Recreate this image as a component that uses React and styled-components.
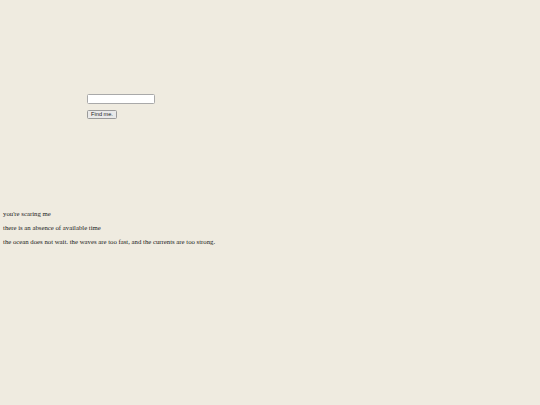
import React from 'react';
import styled, { createGlobalStyle } from 'styled-components';

const Global = createGlobalStyle`
  html, body {
    margin: 0;
    padding: 0;
    background: #efebe0;
  }
  body {
    font-family: "Liberation Serif", "Times New Roman", serif;
    color: #1a1a1a;
  }
`

export default function App() {
  return (
    <>
      <Global />
      <Page>
        <Finder>
          <SearchInput type="text" />
          <FindButton>Find me.</FindButton>
        </Finder>

        <Lines>
          <Line>you're scaring me</Line>
          <Line>there is an absence of available time</Line>
          <Line>the ocean does not wait. the waves are too fast, and the currents are too strong.</Line>
        </Lines>
      </Page>
    </>
  )
}

const Page = styled.main`
    width: 540px;
    height: 405px;
    padding: 0 3px;
    box-sizing: border-box;
    display: flex;
    flex-direction: column;
`

const Finder = styled.form`
    margin-top: 94px;
    margin-left: 84px;
    display: flex;
    flex-direction: column;
    align-items: flex-start;
    gap: 6.5px;
`

const SearchInput = styled.input`
    width: 68px;
    height: 9.5px;
    box-sizing: border-box;
    padding: 0;
    border: 1px solid #a9a9a9;
    border-radius: 1.5px;
    background: #fff;
`

const FindButton = styled.button`
    height: 9px;
    width: 30px;
    box-sizing: border-box;
    padding: 0 2px;
    font-family: "Liberation Sans", Arial, sans-serif;
    font-size: 5.6px;
    line-height: 7px;
    color: #222;
    background: #e9e9e9;
    border: 1px solid #9a9a9a;
    border-radius: 1.5px;
`

const Lines = styled.section`
    margin-top: 90.5px;
    display: flex;
    flex-direction: column;
    gap: 6.3px;
`

const Line = styled.p`
    margin: 0;
    font-size: 6.75px;
    line-height: 8px;
`
